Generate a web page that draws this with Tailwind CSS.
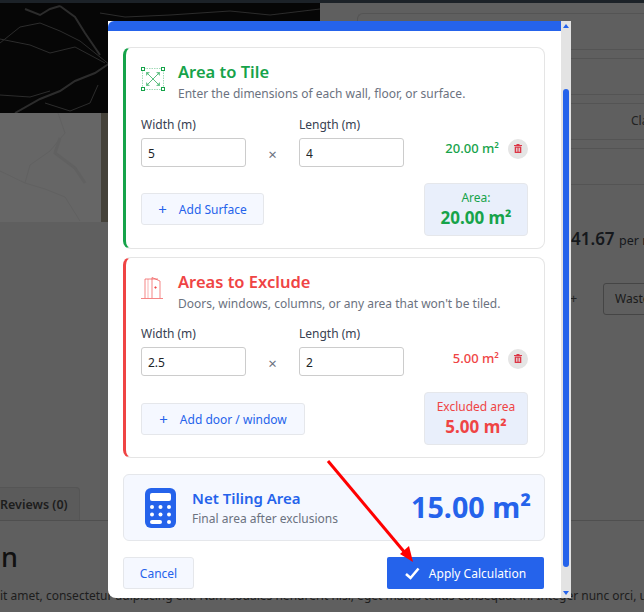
<!DOCTYPE html>
<html lang="en">
<head>
  <meta charset="UTF-8">
  <meta name="viewport" content="width=device-width, initial-scale=1">
  <title>Tiling Calculator</title>
  <script src="https://cdn.jsdelivr.net/npm/@tailwindcss/browser@4"></script>
</head>
<body class="relative w-[644px] h-[612px] overflow-hidden bg-[#5f5f5f] font-['Noto_Sans',sans-serif]">

  <!-- page behind the overlay -->
  <div class="h-[3px] bg-[#1c2228]"></div>
  <div class="flex h-[110px]">
    <svg class="w-[320px] h-[110px] bg-[#060606]" viewBox="0 0 320 110" fill="none" stroke="#2c2c2c">
      <path d="M0 40 L20 24 L40 20 L60 28 L80 38 L95 50 L110 62"/>
      <path d="M0 36 L30 42 L50 50 L75 44 L90 52 L105 60"/>
      <path stroke-width="2" d="M15 110 L40 96 L60 88 L75 78 L95 70 L110 60"/>
      <path stroke-width="2" d="M25 6 L40 12 L50 6 L60 3 M60 3 L75 14 L85 30 L100 52"/>
      <path d="M0 92 L30 94 L50 88 M45 100 L70 108 L90 100 L98 82"/>
      <path d="M100 10 L125 14 L170 12 L230 8 L270 12 L320 6"/>
    </svg>
    <div class="flex-1 bg-[#5f5f5f]"></div>
  </div>
  <div class="flex h-[109px]">
    <svg class="w-[101px] h-[109px] bg-[#666666]" viewBox="0 0 101 109" fill="none" stroke="#616161">
      <path d="M0 58 L25 70 L45 76 L65 84 L80 108"/>
      <path d="M58 0 L65 20 L50 38 L30 52 L25 70"/>
      <path stroke-width="3" d="M60 25 L55 40 L75 55 L85 70"/>
    </svg>
    <div class="w-[20px] bg-[#45423a]"></div>
  </div>

  <div class="absolute left-0 top-[487px] w-[80px] h-[34px] rounded-tr-[4px] border-t border-r border-[#555555] bg-[#5b5b5b] pt-[8px] text-[12.5px] font-semibold text-[#1d1d1d] whitespace-nowrap">Reviews (0)</div>
  <div class="absolute left-0 top-[520px] w-full h-px bg-[#4f4f4f]"></div>
  <div class="absolute left-[1px] top-[539px] text-[27px] font-medium leading-9 text-[#111111]">n</div>
  <div class="absolute left-0 top-[586px] w-[644px] overflow-hidden text-[12px] leading-5 text-[#1d1d1d] whitespace-nowrap">it amet, consectetur adipiscing elit. Nam sodales hendrerit nisi, eget mattis tellus consequat in. Integer nunc orci, u</div>

  <div class="absolute left-[357px] top-[13px] w-[287px] h-[12px] rounded-tl-[6px] border-t border-l border-[#545454]"></div>
  <div class="absolute left-[570px] top-[49px] w-[74px] h-px bg-[#545454]"></div>
  <div class="absolute left-[570px] top-[58px] w-[74px] h-px bg-[#545454]"></div>
  <div class="absolute left-[570px] top-[94px] w-[74px] h-px bg-[#545454]"></div>
  <div class="absolute left-[570px] top-[103px] w-[74px] h-px bg-[#545454]"></div>
  <div class="absolute left-[570px] top-[139px] w-[74px] h-px bg-[#545454]"></div>
  <div class="absolute left-[570px] top-[148px] w-[74px] h-px bg-[#545454]"></div>
  <div class="absolute left-[570px] top-[184px] w-[74px] h-px bg-[#545454]"></div>
  <div class="absolute left-[631px] top-[111px] w-[13px] overflow-hidden text-[12px] leading-5 text-[#222222]">Cla</div>
  <div class="absolute left-[571px] top-[227px] w-[73px] overflow-hidden text-[17px] leading-6 font-semibold text-[#15181c] whitespace-nowrap">41.67 <span class="text-[12.5px] font-normal">per m</span></div>
  <div class="absolute left-[603px] top-[283px] w-[60px] h-[32px] rounded-[3px] border border-[#454545] pl-[11px] text-[12px] leading-[30px] text-[#1a1a1a]">Waste</div>
  <div class="absolute left-[570px] top-[291px] text-[12.5px] leading-4 text-[#222222]">+</div>

  <!-- calculator modal -->
  <div class="absolute left-[108px] top-[21px] flex w-[463px] h-[577px] rounded-bl-[8px] bg-white overflow-hidden">
    <div class="w-[453px]">
      <div class="h-[10px] rounded-tl-[6px] bg-[#2563eb]"></div>
      <div class="px-[15px] pt-[16px]">

        <section class="h-[202px] w-[422px] rounded-[8px] border border-[#e5e5e5] border-l-[3px] border-l-[#16a34a] pl-[15px] pr-[16px] pt-[13px]">
          <div class="flex gap-[13px]">
            <svg class="w-[24px] h-[24px] mt-[6px]" viewBox="0 0 24 24" fill="none" stroke="#16a34a">
              <path stroke-opacity=".4" stroke-dasharray="1.5 1" d="M3 1.5H21M3 22.5H21M1.5 3V21M22.5 3V21"/>
              <path stroke-opacity=".7" d="M6.5 6.5L17.5 17.5M17.5 6.5L6.5 17.5"/>
              <path fill="#16a34a" fill-opacity=".6" stroke="none" d="M5 5H9L5 9ZM19 5H15L19 9ZM5 19H9L5 15ZM19 19H15L19 15Z"/>
              <rect x=".5" y=".5" width="3" height="3" fill="#fff"/><rect x="20.5" y=".5" width="3" height="3" fill="#fff"/>
              <rect x=".5" y="20.5" width="3" height="3" fill="#fff"/><rect x="20.5" y="20.5" width="3" height="3" fill="#fff"/>
            </svg>
            <div>
              <h2 class="text-[16.5px] leading-[22px] font-semibold text-[#16a34a]">Area to Tile</h2>
              <p class="text-[12px] leading-[21px] text-[#6b7280]">Enter the dimensions of each wall, floor, or surface.</p>
            </div>
          </div>
          <div class="mt-[11px] flex items-end">
            <label class="block w-[105px] text-[12px] leading-[20px] text-[#374151]">Width (m)
              <input type="text" value="5" class="mt-[3px] block w-[105px] h-[29px] rounded-[3px] border border-[#cccccc] px-[6px] pt-[1px] text-[12px] text-[#212529]">
            </label>
            <div class="w-[53px] h-[29px] text-center text-[15px] leading-[32px] text-[#6b7280]">×</div>
            <label class="block w-[105px] text-[12px] leading-[20px] text-[#374151]">Length (m)
              <input type="text" value="4" class="mt-[3px] block w-[105px] h-[29px] rounded-[3px] border border-[#cccccc] px-[6px] pt-[1px] text-[12px] text-[#212529]">
            </label>
            <div class="ml-auto mb-[4px] flex h-[29px] items-center gap-[9px]">
              <span class="text-[13px] font-medium text-[#16a34a]">20.00 m²</span>
              <span class="flex w-[20px] h-[20px] items-center justify-center rounded-full bg-[#e5e5e5]">
                <svg class="w-[8px] h-[9px]" viewBox="0 0 8 9" fill="#dc3545"><path d="M2.5 0H5.5V1H8V2H0V1H2.5ZM.7 2.5H7.3V9H.7ZM2.2 3.7V7.8H3V3.7ZM3.6 3.7V7.8H4.4V3.7ZM5 3.7V7.8H5.8V3.7Z"/></svg>
              </span>
            </div>
          </div>
          <div class="mt-[16px] flex items-start justify-between">
            <button class="mt-[10px] flex w-[123px] h-[32px] items-center justify-center gap-[12px] rounded-[3px] border border-[#e5e7eb] bg-[#f5f8ff] pt-[1px] text-[12px] text-[#2563eb]"><span class="text-[15px] leading-none">+</span>Add Surface</button>
            <div class="w-[104px] h-[53px] rounded-[4px] border border-[#e5e7eb] bg-[#e9effb] pt-[6px] text-center">
              <div class="text-[12px] leading-[16px] text-[#16a34a]">Area:</div>
              <div class="text-[17px] leading-[24px] font-bold text-[#16a34a]">20.00 m²</div>
            </div>
          </div>
        </section>

        <section class="mt-[8px] h-[201px] w-[422px] rounded-[8px] border border-[#e5e5e5] border-l-[3px] border-l-[#ef4444] pl-[15px] pr-[16px] pt-[13px]">
          <div class="flex gap-[13px]">
            <svg class="w-[24px] h-[24px] mt-[5px]" viewBox="0 0 24 24" fill="none" stroke="#ef4444" stroke-opacity=".65">
              <path d="M0 22.5H22"/>
              <path d="M4 22V3H17"/><path d="M7 22V3" stroke-opacity=".4"/>
              <path d="M11 22V1.5L19 5V22"/>
              <circle cx="14.5" cy="11.5" r=".8" fill="#ef4444"/>
            </svg>
            <div>
              <h2 class="text-[16.5px] leading-[22px] font-semibold text-[#ef4444]">Areas to Exclude</h2>
              <p class="text-[12px] leading-[21px] text-[#6b7280]">Doors, windows, columns, or any area that won't be tiled.</p>
            </div>
          </div>
          <div class="mt-[10px] flex items-end">
            <label class="block w-[105px] text-[12px] leading-[20px] text-[#374151]">Width (m)
              <input type="text" value="2.5" class="mt-[3px] block w-[105px] h-[29px] rounded-[3px] border border-[#cccccc] px-[6px] pt-[1px] text-[12px] text-[#212529]">
            </label>
            <div class="w-[53px] h-[29px] text-center text-[15px] leading-[32px] text-[#6b7280]">×</div>
            <label class="block w-[105px] text-[12px] leading-[20px] text-[#374151]">Length (m)
              <input type="text" value="2" class="mt-[3px] block w-[105px] h-[29px] rounded-[3px] border border-[#cccccc] px-[6px] pt-[1px] text-[12px] text-[#212529]">
            </label>
            <div class="ml-auto mb-[3px] flex h-[29px] items-center gap-[9px]">
              <span class="text-[13px] font-medium text-[#ef4444]">5.00 m²</span>
              <span class="flex w-[20px] h-[20px] items-center justify-center rounded-full bg-[#e5e5e5]">
                <svg class="w-[8px] h-[9px]" viewBox="0 0 8 9" fill="#dc3545"><path d="M2.5 0H5.5V1H8V2H0V1H2.5ZM.7 2.5H7.3V9H.7ZM2.2 3.7V7.8H3V3.7ZM3.6 3.7V7.8H4.4V3.7ZM5 3.7V7.8H5.8V3.7Z"/></svg>
              </span>
            </div>
          </div>
          <div class="mt-[16px] flex items-start justify-between">
            <button class="mt-[11px] flex w-[164px] h-[32px] items-center justify-center gap-[12px] rounded-[3px] border border-[#e5e7eb] bg-[#f5f8ff] pt-[1px] text-[12px] text-[#2563eb]"><span class="text-[15px] leading-none">+</span>Add door / window</button>
            <div class="w-[104px] h-[53px] rounded-[4px] border border-[#e5e7eb] bg-[#e9effb] pt-[6px] text-center">
              <div class="text-[12px] leading-[16px] text-[#ef4444]">Excluded area</div>
              <div class="text-[17px] leading-[24px] font-bold text-[#ef4444]">5.00 m²</div>
            </div>
          </div>
        </section>

        <section class="mt-[16px] flex h-[67px] w-[422px] items-center rounded-[6px] border border-[#e5e7eb] bg-[#f5f8ff] pl-[21px] pr-[13px]">
          <svg class="w-[31px] h-[40px]" viewBox="0 0 31 40">
            <rect width="31" height="40" rx="6" fill="#2563eb"/>
            <rect x="5" y="5" width="21" height="8" rx="2" fill="#fff"/>
            <g fill="#fff">
              <circle cx="7" cy="19" r="2"/><circle cx="15.5" cy="19" r="2"/><circle cx="24" cy="19" r="2"/>
              <circle cx="7" cy="26.500" r="2"/><circle cx="15.5" cy="26.500" r="2"/><circle cx="24" cy="26.500" r="2"/>
              <rect x="5" y="32" width="12" height="4" rx="2"/><circle cx="24" cy="34" r="2"/>
            </g>
          </svg>
          <div class="ml-[16px]">
            <h3 class="text-[15px] leading-[22px] font-semibold text-[#2563eb]">Net Tiling Area</h3>
            <p class="text-[12px] leading-[20px] text-[#6b7280]">Final area after exclusions</p>
          </div>
          <div class="ml-auto mb-[2px] text-[28.7px] font-bold text-[#2563eb]">15.00 m²</div>
        </section>

        <div class="mt-[16px] flex w-[421px] justify-between">
          <button class="w-[71px] h-[32px] rounded-[3px] border border-[#e5e7eb] bg-[#f5f8ff] pt-[1px] text-[12px] text-[#2563eb]">Cancel</button>
          <button class="flex w-[157px] h-[32px] items-center justify-center gap-[9px] rounded-[2px] bg-[#2563eb] pt-[1px] text-[12px] text-white">
            <svg class="w-[15px] h-[13px]" viewBox="0 0 15 13" fill="none" stroke="#fff" stroke-width="2.6"><path d="M1 7L5.500 11L13.500 1.500"/></svg>
            Apply Calculation
          </button>
        </div>
      </div>
    </div>
    <!-- scrollbar -->
    <div class="relative w-[10px] bg-[#e3e3e3]">
      <svg class="absolute left-[2px] top-[3px] w-[6px] h-[4px]" viewBox="0 0 6 4" fill="#2563eb"><path d="M3 0L6 4H0Z"/></svg>
      <div class="absolute left-[2px] top-[68px] w-[6px] h-[478px] rounded-full bg-[#2563eb]"></div>
      <svg class="absolute left-[2px] bottom-[3px] w-[6px] h-[4px]" viewBox="0 0 6 4" fill="#2563eb"><path d="M0 0H6L3 4Z"/></svg>
    </div>
  </div>

  <!-- red annotation arrow -->
  <svg class="absolute left-[320px] top-[450px] w-[100px] h-[115px]" viewBox="0 0 100 115">
    <path d="M8 11L86 104" stroke="#ff0000" stroke-width="3"/>
    <path d="M93 112L80 104L89 96Z" fill="#ff0000"/>
  </svg>
</body>
</html>
